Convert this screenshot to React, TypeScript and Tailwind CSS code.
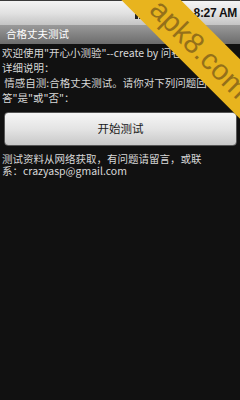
export default function App() {
  const font = { fontFamily: '"Noto Sans CJK SC", "Noto Sans", sans-serif' }
  return (
    <div className="relative w-[240px] h-[400px] overflow-hidden bg-[#111111] text-[#d8d8d8]" style={font}>
      {/* status bar */}
      <div className="flex items-center justify-end gap-1 h-[25px] px-[3px] bg-gradient-to-b from-[#f4f4f4] via-[#e2e2e2] to-[#c4c4c4] border-t border-[#3a3a3a]">
        <div className="flex items-end gap-[1px] mr-auto ml-[132px] h-[12px]">
          <div className="w-[3px] h-[5px] bg-[#222]" />
          <div className="w-[3px] h-[8px] bg-[#222]" />
          <div className="w-[3px] h-[11px] bg-[#222]" />
        </div>
        <span className="text-[12px] font-bold text-[#111] tracking-tight" style={{ fontFamily: '"Liberation Sans", sans-serif' }}>8:27 AM</span>
      </div>

      {/* title bar */}
      <div className="flex items-center h-[19px] px-[6px] bg-gradient-to-b from-[#9a9a9a] to-[#6c6c6c] text-white text-[10.5px] leading-none">
        合格丈夫测试
      </div>

      {/* body */}
      <div className="flex flex-col px-[2px] pt-[1px] text-[10.5px] leading-[15px]">
        <div className="whitespace-nowrap overflow-hidden">欢迎使用"开心小测验"--create by 问卷调查</div>
        <div className="whitespace-nowrap">详细说明：</div>
        <div className="whitespace-nowrap"> &nbsp;情感自测:合格丈夫测试。请你对下列问题回</div>
        <div className="whitespace-nowrap">答"是"或"否"：</div>
      </div>

      <div className="px-[4px] pt-[7px] pr-[3px]">
        <div className="flex items-center justify-center h-[34px] rounded-[4px] border border-[#555] bg-gradient-to-b from-[#f6f6f6] via-[#e4e4e4] to-[#c8c8c8] text-[11.5px] text-[#1a1a1a]">
          开始测试
        </div>
      </div>

      <div className="flex flex-col px-[2px] pt-[7px] text-[10.5px] leading-[12px]">
        <div className="whitespace-nowrap">测试资料从网络获取，有问题请留言，或联</div>
        <div className="whitespace-nowrap">系：crazyasp@gmail.com</div>
      </div>

      {/* watermark */}
      <div className="absolute left-[104px] top-[32px] w-[200px] h-[42px] bg-[#e8b41e] rotate-45 flex items-center justify-center">
        <span className="text-[29px] leading-none text-[#94701a] -translate-x-[6px]" style={{ fontFamily: '"Liberation Sans", sans-serif' }}>apk8.com</span>
      </div>
    </div>
  )
}
